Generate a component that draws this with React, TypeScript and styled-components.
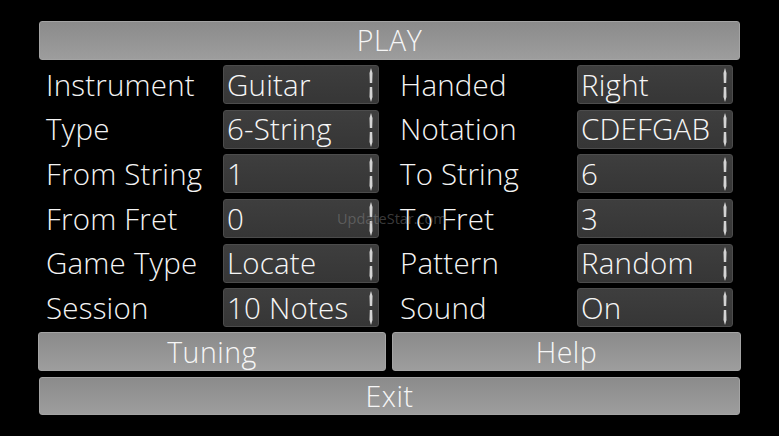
import React from "react";
import styled, { createGlobalStyle } from "styled-components";

const Global = createGlobalStyle`
  html, body { margin: 0; padding: 0; background: #000; }
  body { font-family: "Open Sans", "Noto Sans", sans-serif; color: #f2f2f2; }
`;

const Screen = styled.div`
  position: relative;
  width: 779px;
  height: 436px;
  box-sizing: border-box;
  padding: 21px 38px 0 38px;
  display: flex;
  flex-direction: column;
  background: #000;
  overflow: hidden;
`;

const WideButton = styled.div<{ $h?: number }>`
  height: ${(p) => p.$h ?? 39}px;
  margin: 0 1px;
  box-sizing: border-box;
  border-radius: 3px;
  background: linear-gradient(to bottom, #8b8b8b, #9d9d9d);
  border: 1px solid #a4a4a4;
  display: flex;
  align-items: center;
  justify-content: center;
  font-size: 28.5px;
  font-weight: 300;
  line-height: 1;
  color: #f6f6f6;
  letter-spacing: 0.5px;
`;

const Button = styled(WideButton)`
  margin: 0;
`;

const Grid = styled.div`
  display: grid;
  grid-template-columns: 348px 349px;
  column-gap: 6px;
  row-gap: 5.67px;
  margin-top: 5px;
`;

const Half = styled.div`
  display: grid;
  grid-template-columns: 185px 156px;
  align-items: center;
  height: 39px;
`;

const Label = styled.div`
  padding-left: 8px;
  font-size: 29.5px;
  font-weight: 300;
  line-height: 1;
  color: #f4f4f4;
  white-space: nowrap;
  letter-spacing: 0.2px;
`;

const Select = styled.div`
  position: relative;
  height: 39px;
  box-sizing: border-box;
  border-radius: 3px;
  background: linear-gradient(to bottom, #3e3e3e, #363636);
  border: 1px solid #4c4c4c;
  display: flex;
  align-items: center;
  padding-left: 3px;
  font-size: 29.5px;
  font-weight: 300;
  line-height: 1;
  color: #f6f6f6;
  white-space: nowrap;
  overflow: hidden;
  letter-spacing: 0.2px;
`;

const Arrows = styled.svg`
  position: absolute;
  right: 4px;
  top: 1px;
`;

const ButtonRow = styled.div`
  display: grid;
  grid-template-columns: 348px 349px;
  column-gap: 6px;
  margin-top: 5px;
`;

const ExitWrap = styled.div`
  margin-top: 6px;
`;

const Watermark = styled.div`
  position: absolute;
  left: 337px;
  top: 209px;
  font-size: 14.5px;
  color: rgba(150, 150, 150, 0.4);
  font-family: "Open Sans", sans-serif;
`;

const ArrowIcon = () => (
  <Arrows width="6" height="36" viewBox="0 0 6 36">
    <polygon points="3,1 4.5,6 4.2,16 1.8,16 1.5,6" fill="#d4d4d4" />
    <polygon points="1.8,20 4.2,20 4.5,30 3,35 1.5,30" fill="#d4d4d4" />
  </Arrows>
);

const rows: [string, string, string, string][] = [
  ["Instrument", "Guitar", "Handed", "Right"],
  ["Type", "6-String", "Notation", "CDEFGAB"],
  ["From String", "1", "To String", "6"],
  ["From Fret", "0", "To Fret", "3"],
  ["Game Type", "Locate", "Pattern", "Random"],
  ["Session", "10 Notes", "Sound", "On"],
];

export default function App() {
  return (
    <>
      <Global />
      <Screen>
        <WideButton>PLAY</WideButton>
        <Grid>
          {rows.map(([l1, v1, l2, v2]) => (
            <React.Fragment key={l1}>
              <Half>
                <Label>{l1}</Label>
                <Select>
                  {v1}
                  <ArrowIcon />
                </Select>
              </Half>
              <Half>
                <Label>{l2}</Label>
                <Select>
                  {v2}
                  <ArrowIcon />
                </Select>
              </Half>
            </React.Fragment>
          ))}
        </Grid>
        <ButtonRow>
          <Button>Tuning</Button>
          <Button>Help</Button>
        </ButtonRow>
        <ExitWrap>
          <WideButton $h={38}>Exit</WideButton>
        </ExitWrap>
        <Watermark>UpdateStar.com</Watermark>
      </Screen>
    </>
  );
}
